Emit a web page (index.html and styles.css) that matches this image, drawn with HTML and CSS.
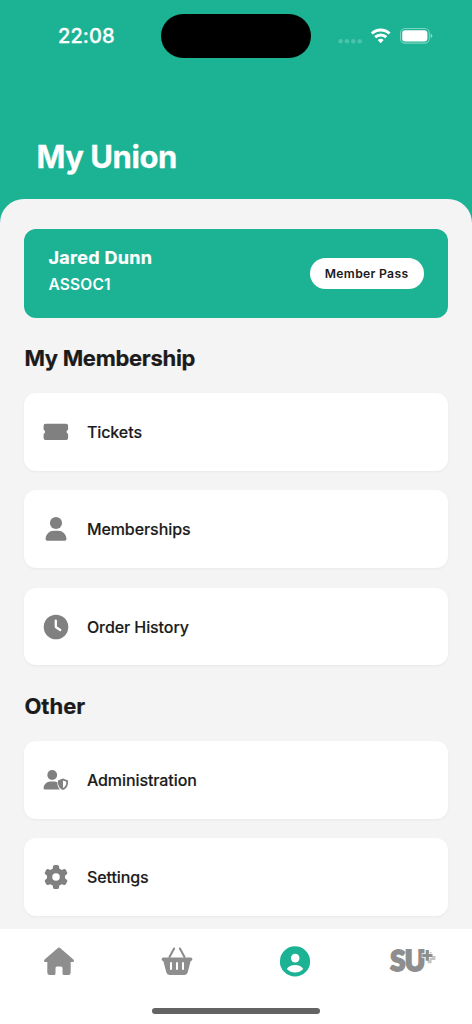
FILE: index.html
```html
<!DOCTYPE html>
<html lang="en">
<head>
<meta charset="utf-8">
<title>My Union</title>
<link rel="stylesheet" href="styles.css">
</head>
<body>
<div class="screen">
  <header class="header">
    <div class="status">
      <span class="time">22:08</span>
      <span class="island"></span>
      <svg class="signals" width="96" height="20" viewBox="0 0 96 20">
        <g fill="#fff" fill-opacity=".22"><circle cx="3.6" cy="15.3" r="2.2"/><circle cx="9.9" cy="15.3" r="2.2"/><circle cx="16.3" cy="15.3" r="2.2"/><circle cx="22.7" cy="15.3" r="2.2"/></g>
        <g fill="none" stroke="#fff" stroke-width="2.9"><path d="M34.8 7.5a13 13 0 0 1 17.8 0"/><path d="M38.1 11.1a8.3 8.3 0 0 1 11.2 0"/></g>
        <path fill="#fff" d="M40.7 14a4.6 4.6 0 0 1 6 0l-3 3.2z"/>
        <rect x="63.5" y="2.5" width="28.8" height="14.6" rx="4.6" fill="none" stroke="#fff" stroke-opacity=".42" stroke-width="1.1"/>
        <rect x="65.2" y="4.2" width="25.2" height="11.2" rx="3" fill="#fff"/>
        <path d="M93.7 7.5q1.7.7 1.7 2.3t-1.7 2.3z" fill="#fff" fill-opacity=".5"/>
      </svg>
    </div>
    <h1 class="title">My Union</h1>
  </header>
  <main class="sheet">
    <section class="member">
      <div>
        <div class="name">Jared Dunn</div>
        <div class="code">ASSOC1</div>
      </div>
      <button class="pass">Member Pass</button>
    </section>
    <h2 class="heading">My Membership</h2>
    <div class="list">
      <div class="row">
        <svg class="icon" viewBox="0 0 26 26"><path d="M2.500 4.800h20.700a1.900 1.900 0 0 1 1.900 1.900v4a2.300 2.300 0 0 0 0 4.300v4a1.900 1.900 0 0 1-1.900 1.900H2.500A1.900 1.900 0 0 1 .6 19v-4a2.300 2.300 0 0 0 0-4.300v-4a1.900 1.900 0 0 1 1.900-1.900z"/></svg>
        <span class="label">Tickets</span>
      </div>
      <div class="row">
        <svg class="icon" viewBox="0 0 26 26"><circle cx="13" cy="7" r="6.1"/><path d="M10.7 14.8h4.6a8.2 8.2 0 0 1 8.2 8.2q0 1.8-1.7 1.8H4.2q-1.7 0-1.7-1.8a8.2 8.2 0 0 1 8.2-8.2z"/></svg>
        <span class="label">Memberships</span>
      </div>
      <div class="row">
        <svg class="icon" viewBox="0 0 26 26"><circle cx="13" cy="13" r="12.3"/><path d="M12.8 6.6V13l4.4 3" fill="none" stroke="#fff" stroke-width="2.3" stroke-linecap="round" stroke-linejoin="round"/></svg>
        <span class="label">Order History</span>
      </div>
    </div>
    <h2 class="heading other">Other</h2>
    <div class="list">
      <div class="row">
        <svg class="icon" viewBox="0 0 26 26"><circle cx="9.2" cy="8" r="4.9"/><path d="M7.3 14.5h4.1q1.6 0 3 .7-.1 4.8 2.6 7.3H1.9q-1.3 0-1.3-1.3a6.7 6.7 0 0 1 6.7-6.7z"/><path fill-rule="evenodd" d="M20 11.500l5.100 2q.5 7.300-5.100 9.500-5.600-2.200-5.100-9.500zm0 1.900v7.600q3.500-2 3.300-6.300z"/></svg>
        <span class="label">Administration</span>
      </div>
      <div class="row">
        <svg class="icon" viewBox="0 0 26 26"><path transform="translate(1 1) scale(.047)" d="M495.900 166.600c3.200 8.700.5 18.400-6.400 24.600l-43.300 39.400c1.100 8.300 1.700 16.800 1.700 25.400s-.6 17.100-1.700 25.400l43.300 39.400c6.900 6.200 9.600 15.900 6.400 24.600-4.400 11.900-9.700 23.300-15.800 34.300l-4.700 8.100c-6.600 11-14 21.400-22.100 31.200-5.900 7.200-15.700 9.600-24.500 6.800l-55.700-17.700c-13.400 10.300-28.200 18.900-44 25.400l-12.500 57.100c-2 9.100-9 16.300-18.200 17.800-13.800 2.300-28 3.500-42.500 3.500s-28.700-1.200-42.500-3.500c-9.200-1.500-16.200-8.700-18.200-17.800l-12.500-57.100c-15.800-6.500-30.600-15.100-44-25.400l-55.600 17.800c-8.800 2.800-18.600.3-24.500-6.800-8.100-9.800-15.500-20.200-22.100-31.200l-4.700-8.100c-6.100-11-11.400-22.400-15.800-34.300-3.200-8.700-.5-18.400 6.400-24.600l43.300-39.400C64.600 273.100 64 264.600 64 256s.6-17.100 1.700-25.400l-43.300-39.400c-6.900-6.200-9.600-15.900-6.400-24.600 4.400-11.900 9.700-23.300 15.800-34.300l4.700-8.100c6.600-11 14-21.400 22.100-31.200 5.900-7.200 15.700-9.600 24.500-6.800l55.700 17.700c13.400-10.300 28.200-18.900 44-25.400l12.500-57.100c2-9.100 9-16.300 18.200-17.800C227.300 1.200 241.500 0 256 0s28.700 1.200 42.500 3.500c9.200 1.500 16.200 8.700 18.200 17.800l12.500 57.100c15.800 6.500 30.600 15.100 44 25.400l55.700-17.700c8.800-2.800 18.600-.3 24.500 6.800 8.100 9.800 15.500 20.200 22.100 31.200l4.700 8.100c6.100 11 11.400 22.400 15.800 34.300zM256 336a80 80 0 1 0 0-160 80 80 0 1 0 0 160z"/></svg>
        <span class="label">Settings</span>
      </div>
    </div>
  </main>
  <nav class="tabs">
    <div class="tab"><svg width="32" height="32" viewBox="0 0 32 32"><path d="M14.900 3q1.100-.9 2.200 0l13.300 11.500q1 1 .4 1.900-.4.700-1.400.7h-1.700v10.400q0 2.500-2.400 2.500h-4.300q-1.500 0-1.500-1.500v-5.400q0-1.500-1.500-1.500h-4q-1.500 0-1.500 1.500v5.400q0 1.500-1.500 1.500H6.700q-2.400 0-2.400-2.500V17.100H2.600q-1 0-1.400-.7-.6-.9.4-1.900z"/></svg></div>
    <div class="tab"><svg width="32" height="32" viewBox="0 0 32 32"><path d="M13.100 3.500L8.500 12M18.900 3.500l4.600 8.500" fill="none" stroke="#8e8e8e" stroke-width="2.100" stroke-linecap="round"/><path fill-rule="evenodd" d="M2.300 12.600h27.400a1.700 1.700 0 0 1 0 3.400l-3 11.300q-.7 2.600-3.200 2.600h-15q-2.500 0-3.200-2.600L2.300 16a1.700 1.700 0 0 1 0-3.400zM9 17.900v6a1 1 0 0 0 2 0v-6a1 1 0 0 0-2 0zm6 0v6a1 1 0 0 0 2 0v-6a1 1 0 0 0-2 0zm6 0v6a1 1 0 0 0 2 0v-6a1 1 0 0 0-2 0z"/></svg></div>
    <div class="tab"><svg width="32" height="32" viewBox="0 0 32 32"><circle cx="16" cy="16.400" r="15.100" fill="#1cb294"/><g fill="#fff"><circle cx="16.200" cy="13.100" r="4.300"/><path d="M7.800 24.100q2.600-4.200 8.300-4.200t8.200 4.200q-3.500 3.500-8.200 3.500t-8.300-3.500z"/></g></svg></div>
    <div class="tab"><div class="logo"><span class="su">SU</span><svg class="plus" width="15" height="17" viewBox="0 0 15 17"><g fill="none"><path d="M8.600 3v11.200M3.200 8.900h11.200" stroke="#c4c4c4" stroke-width="4"/><path d="M6.300.3v11M.8 6.500h10.500" stroke="#fff" stroke-width="4.600"/><path d="M6.300 1v10.800M1.200 6.500h10.300" stroke="#8e8e8e" stroke-width="3.200"/></g></svg></div></div>
    <span class="home-bar"></span>
  </nav>
</div>
</body>
</html>
```

FILE: styles.css
```css
* { box-sizing: border-box; }
body { margin: 0; font-family: Inter, "Liberation Sans", sans-serif; color: #1b1b1b; }
.screen { width: 472px; height: 1024px; overflow: hidden; display: flex; flex-direction: column; background: #1cb294; }
.header { flex: none; height: 199px; color: #fff; }
.status { display: flex; align-items: center; height: 72px; padding: 0 39px 0 58px; }
.time { width: 103px; font-size: 20px; font-weight: 500; letter-spacing: .1px; -webkit-text-stroke: .3px #fff; }
.island { width: 150px; height: 44px; border-radius: 22px; background: #000; }
.signals { margin-left: auto; margin-top: -1px; overflow: visible; }
.title { margin: 65px 0 0 36.500px; font-size: 31px; line-height: 40px; font-weight: 700; letter-spacing: -.45px; -webkit-text-stroke: .3px #fff; }
.sheet { flex: 1; min-height: 0; overflow: hidden; padding: 30px 24.400px 0; border-radius: 24px 24px 0 0; background: #f4f4f4; }
.member { height: 88.500px; padding: 0 24px; border-radius: 12px; background: #1cb294; color: #fff; display: flex; align-items: center; justify-content: space-between; }
.name { font-size: 18px; line-height: 26px; font-weight: 700; margin-top: -3px; letter-spacing: .3px; -webkit-text-stroke: .2px #fff; }
.code { font-size: 15.500px; line-height: 27px; font-weight: 600; letter-spacing: .2px; }
.pass { width: 114px; height: 31px; padding: 0; border: 0; border-radius: 16px; background: #fff; color: #1b1b1b; font: 600 12.200px Inter, sans-serif; letter-spacing: .3px; }
.heading { margin: 0; height: 75.500px; line-height: 81px; font-size: 22px; font-weight: 700; letter-spacing: -.3px; -webkit-text-stroke: .2px #1b1b1b; }
.other { line-height: 82px; letter-spacing: 0; }
.list { display: flex; flex-direction: column; gap: 19.400px; }
.row { height: 77.900px; padding-left: 18.500px; border-radius: 12px; background: #fff; box-shadow: 0 1px 3px rgba(0,0,0,.05); display: flex; align-items: center; gap: 18px; }
.icon { width: 26px; height: 26px; flex: none; fill: #808080; }
.row .icon { margin-left: -.3px; margin-right: .3px; }
.label { font-size: 16px; font-weight: 500; letter-spacing: -.08px; -webkit-text-stroke: .15px #1b1b1b; }
.tabs { position: relative; flex: none; height: 95px; background: #fff; display: grid; grid-template-columns: repeat(4, 1fr); }
.tab { display: flex; justify-content: center; padding-top: 16px; }
.tab svg { fill: #8e8e8e; }
.logo { display: flex; align-items: flex-start; height: 32px; }
.su { font: 900 27.500px/32px Lato, sans-serif; color: #8e8e8e; letter-spacing: -.5px; -webkit-text-stroke: 1.900px #8e8e8e; }
.plus { margin: 4px 0 0 -4px; }
.home-bar { position: absolute; left: 152px; bottom: 10px; width: 168px; height: 6px; border-radius: 3px; background: #636363; }
```
